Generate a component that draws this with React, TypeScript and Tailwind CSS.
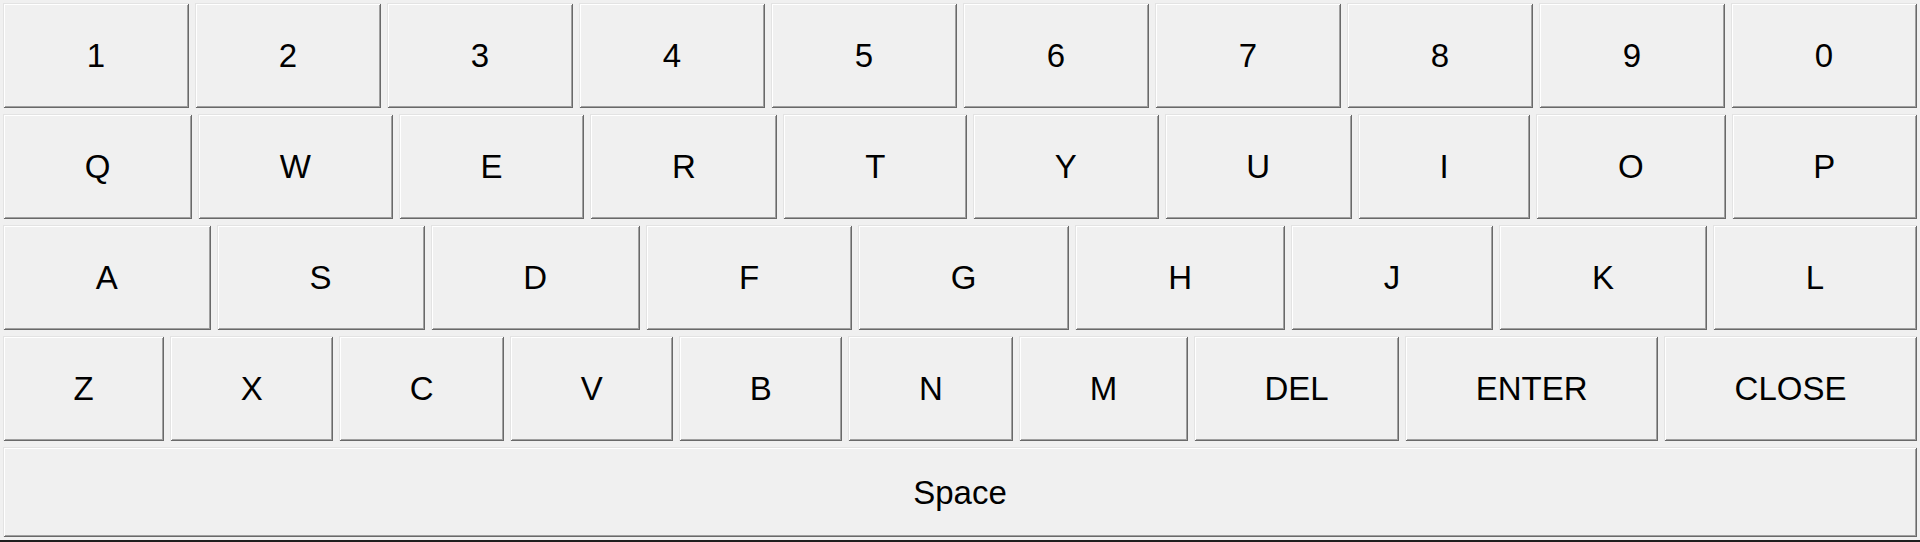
import React from 'react';

const rows = [
  ['1', '2', '3', '4', '5', '6', '7', '8', '9', '0'],
  ['Q', 'W', 'E', 'R', 'T', 'Y', 'U', 'I', 'O', 'P'],
  ['A', 'S', 'D', 'F', 'G', 'H', 'J', 'K', 'L'],
  ['Z', 'X', 'C', 'V', 'B', 'N', 'M', 'DEL', 'ENTER', 'CLOSE'],
];

// classic raised windows button look
const keyStyle =
  'flex items-center justify-center bg-[#f0f0f0] text-black text-[33px] leading-none ' +
  'shadow-[inset_1px_1px_0_#e3e3e3,inset_-1px_-1px_0_#696969,inset_2px_2px_0_#ffffff,inset_-2px_-2px_0_#a0a0a0]';

const Key = ({ label, onPress }: { label: string; onPress: (k: string) => void }) => (
  <button type="button" onClick={() => onPress(label)} className={`${keyStyle} flex-auto h-full px-2`}>
    {label}
  </button>
);

const App = () => {
  const handlePress = (k: string) => {
    console.log(k);
  };

  return (
    <div
      className="w-full h-[542px] bg-[#f0f0f0] flex flex-col overflow-hidden"
      style={{ fontFamily: '"Liberation Sans", Arial, sans-serif' }}
    >
      <div className="flex flex-col gap-[6px] p-[3px]">
        {rows.map((row, i) => (
          <div key={i} className="flex gap-[6px] h-[105px]">
            {row.map((k) => (
              <Key key={k} label={k} onPress={handlePress} />
            ))}
          </div>
        ))}
        <div className="flex h-[90px]">
          <button type="button" onClick={() => handlePress(' ')} className={`${keyStyle} w-full h-full`}>
            Space
          </button>
        </div>
      </div>
      <div className="flex-1 bg-[#1e1e1e]" />
    </div>
  );
};

export default App;
